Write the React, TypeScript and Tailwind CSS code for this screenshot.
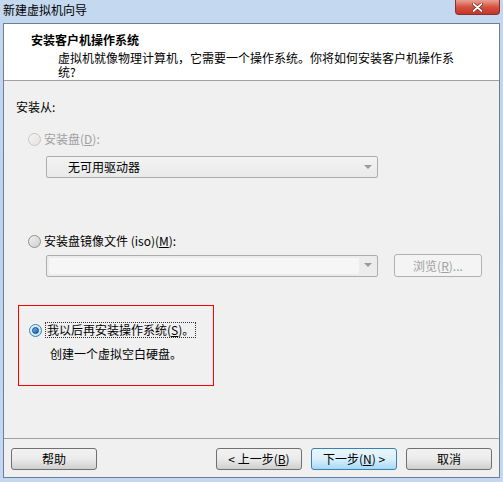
import React from "react";

const font = { fontFamily: '"Noto Sans CJK SC", "Microsoft YaHei", sans-serif' };

function Radio({ checked, disabled }: { checked?: boolean; disabled?: boolean }) {
  if (checked) {
    return (
      <span className="relative flex h-[13px] w-[13px] shrink-0 items-center justify-center rounded-full border border-[#3c7fb1] bg-gradient-to-br from-[#e6f3fc] to-[#c2e1f7]">
        <span className="h-[7px] w-[7px] rounded-full border border-[#0d4b83] bg-gradient-to-br from-[#6fb7ec] to-[#0a5ea6]" />
      </span>
    );
  }
  return (
    <span
      className={
        "h-[13px] w-[13px] shrink-0 rounded-full border " +
        (disabled
          ? "border-[#c6c6c6] bg-gradient-to-br from-[#f4f4f4] to-[#e2e2e2]"
          : "border-[#8e8f8f] bg-gradient-to-br from-[#f0f0f0] to-[#cfcfcf]")
      }
    />
  );
}

function Arrow({ color = "#9a9a9a" }: { color?: string }) {
  return (
    <svg width="8" height="5" viewBox="0 0 8 5">
      <path d="M0 0 H8 L4 4 Z" fill={color} />
    </svg>
  );
}

function Btn({ children, primary }: { children: React.ReactNode; primary?: boolean }) {
  return (
    <div
      className={
        "flex h-[22px] w-[86px] items-center justify-center rounded-[3px] border text-[12px] text-black " +
        (primary
          ? "border-[#3c7fb1] bg-gradient-to-b from-[#eaf6fd] via-[#d9f0fc] to-[#a7d9f5]"
          : "border-[#707070] bg-gradient-to-b from-[#f2f2f2] via-[#ebebeb] to-[#cfcfcf]")
      }
    >
      {children}
    </div>
  );
}

export default function App() {
  return (
    <div
      className="flex h-[482px] w-[503px] flex-col bg-gradient-to-b from-[#c4d8ef] via-[#bcd3ee] to-[#c4d9f1]"
      style={font}
    >
      {/* Title bar */}
      <div className="flex h-[23px] shrink-0 items-start justify-between">
        <div className="pl-[3px] pt-[2px] text-[12px] leading-[16px] text-black">新建虚拟机向导</div>
        <div className="mr-[3px] flex h-[15px] w-[45px] items-center justify-center rounded-b-[4px] border border-t-0 border-[#8a2f2f] bg-gradient-to-b from-[#e8a093] via-[#d6503f] to-[#c3372b]">
          <svg width="11" height="9" viewBox="0 0 11 9">
            <path d="M1.5 1 L9.5 8 M9.5 1 L1.5 8" stroke="#5a1a14" strokeWidth="3" strokeLinecap="round" />
            <path d="M1.5 1 L9.5 8 M9.5 1 L1.5 8" stroke="#ffffff" strokeWidth="1.8" strokeLinecap="round" />
          </svg>
        </div>
      </div>

      {/* Client area */}
      <div className="mx-[3px] mb-[4px] flex flex-1 flex-col border border-[#6d7f97] bg-[#f0f0f0]">
        {/* Header */}
        <div className="h-[57px] shrink-0 border-b border-[#a0a0a0] bg-white pl-[27px] pt-[8px]">
          <div className="text-[12px] font-bold leading-[16px] text-black">安装客户机操作系统</div>
          <div className="mt-[3px] w-[427px] break-all pl-[27px] text-[12px] leading-[14px] text-black">
            虚拟机就像物理计算机，它需要一个操作系统。你将如何安装客户机操作系统?
          </div>
        </div>

        {/* Body */}
        <div className="flex flex-1 flex-col pl-[12px]">
          <div className="mt-[18px] text-[12px] leading-[16px] text-black">安装从:</div>

          <div className="ml-[12px] mt-[16px] flex h-[16px] items-center gap-[3px] text-[12px] text-[#a0a0a0]">
            <Radio disabled />
            <span>
              安装盘(<span className="underline">D</span>):
            </span>
          </div>

          <div className="ml-[30px] mt-[9px] flex h-[22px] w-[332px] items-center justify-between rounded-[2px] border border-[#adadad] bg-gradient-to-b from-[#f3f3f3] to-[#e9e9e9] pl-[21px] pr-[5px] text-[12px] text-black">
            <span>无可用驱动器</span>
            <Arrow />
          </div>

          <div className="ml-[12px] mt-[55px] flex h-[16px] items-center gap-[3px] text-[12px] text-black">
            <Radio />
            <span>
              安装盘镜像文件 (iso)(<span className="underline">M</span>):
            </span>
          </div>

          <div className="mt-[5px] flex items-center">
            <div className="ml-[30px] flex h-[22px] w-[332px] items-center justify-between rounded-[2px] border border-[#adadad] bg-[#ececec] pl-[2px] pr-[5px]">
              <div className="h-[16px] w-[310px] bg-[#f6f6f6]" />
              <Arrow />
            </div>
            <div className="ml-[16px] flex h-[23px] w-[88px] items-center justify-center rounded-[3px] border border-[#adb2b5] bg-[#f4f4f4] text-[12px] text-[#a0a0a0]">
              浏览(<span className="underline">R</span>)...
            </div>
          </div>

          <div className="ml-[2px] mt-[28px] h-[81px] w-[196px] border border-[#ff0000] pl-[10px] pt-[16px]">
            <div className="flex h-[16px] items-center gap-[3px] text-[12px] text-black">
              <Radio checked />
              <span className="border border-dotted border-[#333] px-px leading-[14px]">
                我以后再安装操作系统(<span className="underline">S</span>)。
              </span>
            </div>
            <div className="ml-[21px] mt-[8px] text-[12px] leading-[16px] text-black">创建一个虚拟空白硬盘。</div>
          </div>

          <div className="flex-1" />
        </div>

        {/* Footer */}
        <div className="h-[39px] shrink-0 border-t border-[#a0a0a0] px-[7px] pt-[9px]">
          <div className="flex items-center">
            <Btn>帮助</Btn>
            <div className="flex-1" />
            <Btn>
              &lt; 上一步(<span className="underline">B</span>)
            </Btn>
            <div className="w-[9px]" />
            <Btn primary>
              下一步(<span className="underline">N</span>) &gt;
            </Btn>
            <div className="w-[9px]" />
            <Btn>取消</Btn>
          </div>
        </div>
      </div>
    </div>
  );
}
